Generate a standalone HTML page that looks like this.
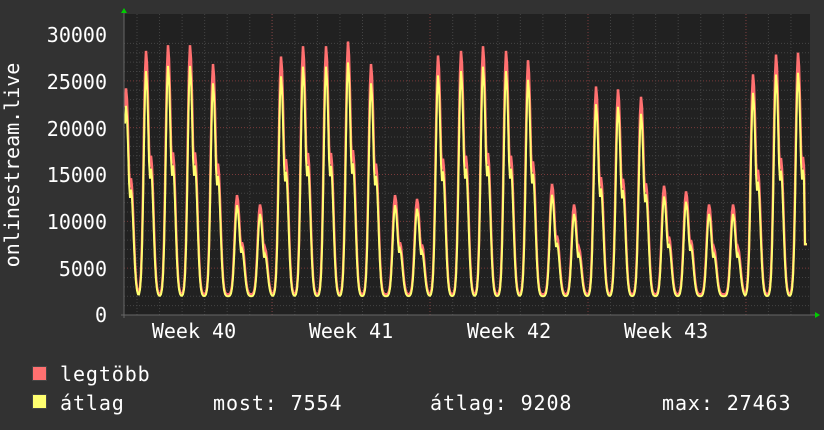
<!DOCTYPE html>
<html><head><meta charset="utf-8"><style>
html,body{margin:0;padding:0;background:#323232;}
body{width:824px;height:430px;overflow:hidden;position:relative;font-family:"DejaVu Sans Mono","Liberation Mono",monospace;color:#fff;}
.t{position:absolute;font-size:20px;letter-spacing:0.9px;white-space:pre;line-height:1}
.sq{position:absolute;width:13px;height:13px;border:1px solid #444}
</style></head><body>
<svg id="g" width="824" height="430" style="position:absolute;left:0;top:0">
<rect x="124" y="14" width="686" height="301" fill="#212121"/>
<g id="grid"></g>
<path id="mx" fill="none" stroke="#ff7070" stroke-width="2.5"/>
<path id="av" fill="none" stroke="#ffff70" stroke-width="2"/>
<line x1="121" y1="315" x2="816" y2="315" stroke="#666" stroke-width="1"/>
<line x1="124" y1="12" x2="124" y2="318" stroke="#666" stroke-width="1"/>
<polygon points="121,13 127,13 124,8" fill="#00cc00"/>
<polygon points="815,312 815,318 820,315" fill="#00cc00"/>
<g font-family="DejaVu Sans Mono,Liberation Mono,monospace" font-size="20" fill="#fff" text-anchor="end">
<text x="107" y="42">30000</text><text x="107" y="89">25000</text><text x="107" y="136">20000</text>
<text x="107" y="182">15000</text><text x="107" y="229">10000</text><text x="107" y="276">5000</text>
<text x="107" y="322">0</text>
</g>
<g font-family="DejaVu Sans Mono,Liberation Mono,monospace" font-size="20" fill="#fff" text-anchor="middle">
<text x="194" y="338">Week 40</text><text x="351" y="338">Week 41</text><text x="509" y="338">Week 42</text><text x="666" y="338">Week 43</text>
</g>
<text transform="translate(19,165) rotate(-90)" font-family="DejaVu Sans Mono,Liberation Mono,monospace" font-size="20" fill="#fff" text-anchor="middle">onlinestream.live</text>
</svg>
<div class="sq" style="left:32px;top:366px;background:#ff7070"></div>
<div class="sq" style="left:32px;top:394px;background:#ffff70"></div>
<div class="t" style="left:60px;top:364px">legtöbb</div>
<div class="t" style="left:60px;top:393px">átlag</div>
<div class="t" style="left:213px;top:393px">most: 7554</div>
<div class="t" style="left:430px;top:393px">átlag: 9208</div>
<div class="t" style="left:662px;top:393px">max: 27463</div>
<script>
var Y=function(v){return 315-v*281/30000;};
var g='';
for(var v=1000;v<30000;v+=1000){var yy=Y(v);var maj=v%5000==0;
g+='<line x1="124" x2="810" y1="'+yy+'" y2="'+yy+'" stroke="'+(maj?'#7a3a3a':'#444')+'" stroke-dasharray="1,2"/>';}
for(var x=124+13;x<810;x+=22.55){g+='<line y1="14" y2="315" x1="'+x+'" x2="'+x+'" stroke="#444" stroke-dasharray="1,2"/>';}
[272,430,588,746].forEach(function(x){g+='<line y1="14" y2="315" x1="'+x+'" x2="'+x+'" stroke="#7a3a3a" stroke-dasharray="1,2"/>';});
document.getElementById('grid').innerHTML=g;
var P=[[126,24000],[146,28000],[168,28600],[190,28600],[213,26600],[237,12600],[260,11600],[281,27400],[303,28500],[326,28500],[348,29000],[371,26600],[395,12600],[417,12200],[438,27500],[461,28000],[483,28500],[506,28000],[528,27000],[552,13800],[574,11600],[596,24200],[618,23900],[641,23100],[664,13600],[686,13000],[709,11600],[733,11600],[753,25500],[776,27600],[798,27800]];
function val(x,f){var s=2000;for(var i=0;i<P.length;i++){var d=x-P[i][0];var w=d<0?3.2:4.2;var pk=P[i][1]*f;
var v=2000+(pk-2000)*Math.exp(-Math.pow(d/w,2));var sh=2000+(pk*0.6-2000)*Math.exp(-Math.pow((d-5)/3.5,2));
s=Math.max(s,v,sh);}return s;}
function path(f,off){var d='';for(var x=125;x<=807;x+=1){var v=val(x,f)+off;if(x>=805)v=7554;d+=(x==125?'M':'L')+x+','+Y(v).toFixed(1);}return d;}
document.getElementById('mx').setAttribute('d',path(1,200));
document.getElementById('av').setAttribute('d',path(0.93,0));
</script>
</body></html>
